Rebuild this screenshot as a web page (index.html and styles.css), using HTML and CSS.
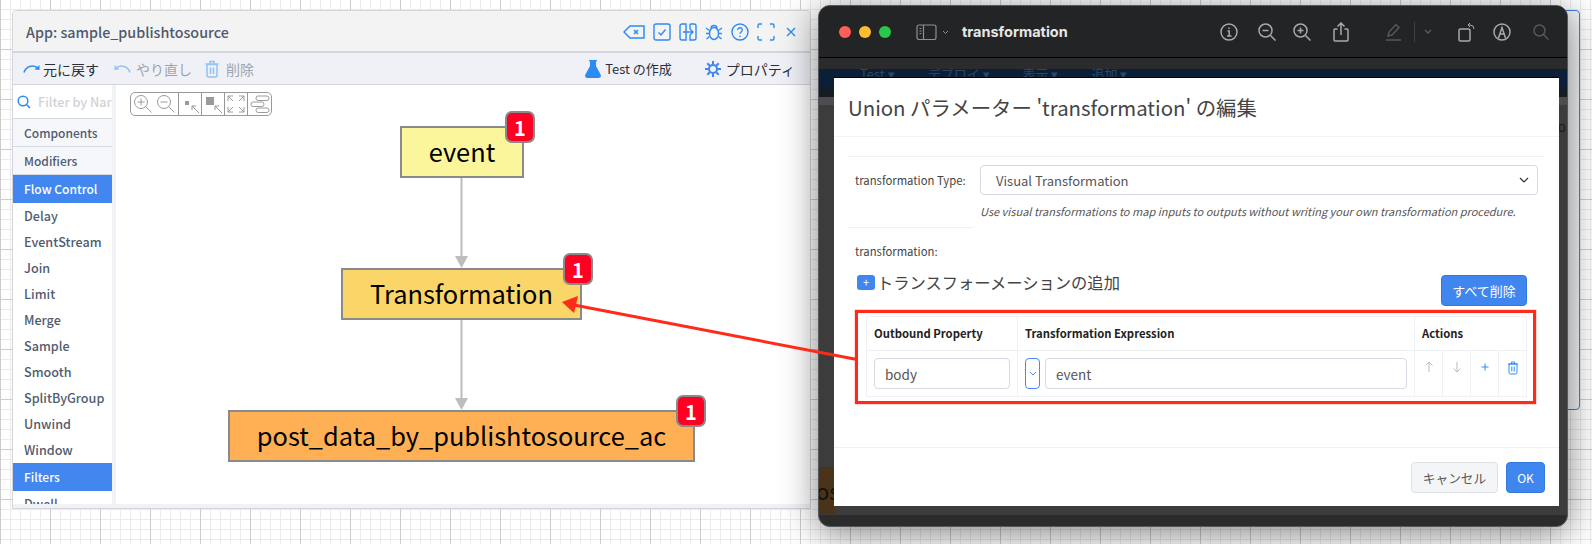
FILE: index.html
```html
<!DOCTYPE html>
<html lang="ja">
<head>
  <meta charset="UTF-8" />
  <title>App: sample_publishtosource</title>
  <link rel="stylesheet" href="styles.css">
</head>
<body>

  <!-- blue panel peeking out behind the preview window -->
  <div class="back-panel"></div>

  <div class="app-window">
    <div class="app-title">
      <span class="app-name">App: sample_publishtosource</span>
      <div class="app-icons">
        <svg width="22" height="14" viewBox="0 0 22 14"><path d="M1 7l6-6h14v12H7z" stroke-width="1.5"/><path d="M11 5l4 4M15 5l-4 4" stroke-width="1.6"/></svg>
        <svg width="18" height="18" viewBox="0 0 18 18"><rect x="1" y="1" width="16" height="16" rx="2"/><path d="M5.5 9.5l2.5 2.5 4.5-5.500"/></svg>
        <svg width="18" height="18" viewBox="0 0 18 18"><path d="M7 1H3a2 2 0 0 0-2 2v12a2 2 0 0 0 2 2h4zM11 1h4a2 2 0 0 1 2 2v12a2 2 0 0 1-2 2h-4v-5M11 6V1M4 9h10M11 6l3 3-3 3"/></svg>
        <svg width="18" height="18" viewBox="0 0 18 18"><ellipse cx="9" cy="10.500" rx="4.500" ry="6"/><path d="M6 5.500a3 3 0 0 1 6 0M1 5l3.500 2.500M17 5l-3.500 2.500M1 10.500h3M14 10.500h3M1.500 16l3-2.500M16.500 16l-3-2.500"/></svg>
        <svg width="18" height="18" viewBox="0 0 18 18"><circle cx="9" cy="9" r="8"/><path d="M6.700 7a2.300 2.300 0 1 1 3.300 2.100c-.7.4-1 .8-1 1.600"/><path d="M9 12.800v1.200" stroke-width="1.600"/></svg>
        <svg width="18" height="18" viewBox="0 0 18 18"><path d="M1 5V2.500A1.500 1.500 0 0 1 2.500 1H5M13 1h2.500A1.500 1.500 0 0 1 17 2.500V5M17 13v2.500a1.500 1.500 0 0 1-1.500 1.500H13M5 17H2.500A1.500 1.500 0 0 1 1 15.500V13"/></svg>
        <svg class="app-close" width="10" height="10" viewBox="0 0 10 10"><path d="M1 1l8 8M9 1l-8 8"/></svg>
      </div>
    </div>

    <div class="app-toolbar">
      <div class="tool">
        <svg class="tool-blue" width="17" height="9" viewBox="0 0 17 9"><path d="M1 8.500C3 2 10 .5 14 3.500"/><path class="solid" d="M11.500 5.500L16.500 6V1z"/></svg>
        <span>元に戻す</span>
      </div>
      <div class="tool tool-off redo">
        <svg class="tool-blue" width="17" height="9" viewBox="0 0 17 9"><path d="M16 8.500C14 2 7 .5 3 3.500"/><path class="solid" d="M5.500 5.500L.5 6V1z"/></svg>
        <span>やり直し</span>
      </div>
      <div class="tool tool-off delete">
        <svg class="tool-blue" width="14" height="18" viewBox="0 0 14 18"><path d="M2 4.500h10V15a2 2 0 0 1-2 2H4a2 2 0 0 1-2-2zM.5 4h13M5 3.500V1.500h4v2M5.500 7.500v6.500M8.500 7.500v6.500"/></svg>
        <span>削除</span>
      </div>
      <div class="tool test">
        <svg width="16" height="18" viewBox="0 0 16 18"><path class="flask" d="M4 0h8v1.200h-1V6l4.600 8.400C16.600 16.300 15.300 18 13.500 18h-11C.7 18-.6 16.300.4 14.400L5 6V1.200H4z"/></svg>
        <span>Test の作成</span>
      </div>
      <div class="tool props">
        <svg width="16" height="16" viewBox="0 0 16 16"><circle class="gear" cx="8" cy="8" r="4"/><path class="gear" d="M8 0v3.500M8 12.500V16M0 8h3.500M12.500 8H16M2.300 2.300l2.500 2.500M11.200 11.200l2.500 2.500M13.700 2.300l-2.500 2.500M4.800 11.200l-2.500 2.500"/></svg>
        <span>プロパティ</span>
      </div>
    </div>

    <div class="app-main">
      <div class="palette">
        <div class="palette-filter">
          <svg width="14" height="14" viewBox="0 0 14 14"><circle cx="6" cy="6" r="4.800"/><path d="M9.500 9.500l3.500 3.500"/></svg>
          <span>Filter by Nar</span>
        </div>
        <div class="palette-section">Components</div>
        <div class="palette-section">Modifiers</div>
        <div class="palette-section palette-active">Flow Control</div>
        <div class="palette-item">Delay</div>
        <div class="palette-item">EventStream</div>
        <div class="palette-item">Join</div>
        <div class="palette-item">Limit</div>
        <div class="palette-item">Merge</div>
        <div class="palette-item">Sample</div>
        <div class="palette-item">Smooth</div>
        <div class="palette-item">SplitByGroup</div>
        <div class="palette-item">Unwind</div>
        <div class="palette-item">Window</div>
        <div class="palette-section palette-active">Filters</div>
        <div class="palette-item">Dwell</div>
      </div>

      <div class="canvas">
        <div class="zoom-bar">
          <div class="zoom-btn"><svg width="20" height="20" viewBox="0 0 20 20"><circle cx="8" cy="8" r="6.500"/><path d="M8 4.500v7M4.500 8h7M12.500 12.500l6 6"/></svg></div>
          <div class="zoom-btn"><svg width="20" height="20" viewBox="0 0 20 20"><circle cx="8" cy="8" r="6.500"/><path d="M4.500 8h7M12.500 12.500l6 6"/></svg></div>
          <div class="zoom-btn"><svg width="20" height="20" viewBox="0 0 20 20"><rect class="zoom-fill" x="5" y="7" width="4" height="4"/><path d="M12 12l7 7M12 12v4M12 12h4"/></svg></div>
          <div class="zoom-btn"><svg width="20" height="20" viewBox="0 0 20 20"><rect class="zoom-fill" x="3" y="3" width="8" height="8"/><path d="M12 12l7 7M12 12v4M12 12h4"/></svg></div>
          <div class="zoom-btn"><svg width="20" height="20" viewBox="0 0 20 20"><path d="M2 2l5 5M2 2v5M2 2h5M18 2l-5 5M18 2v5M18 2h-5M2 18l5-5M2 18v-5M2 18h5M18 18l-5-5M18 18v-5M18 18h-5"/></svg></div>
          <div class="zoom-btn"><svg width="20" height="20" viewBox="0 0 20 20"><rect x="6" y="2" width="13" height="4.500" rx="2.200"/><rect x="1" y="8" width="13" height="4.500" rx="2.200"/><rect x="6" y="14" width="13" height="4.500" rx="2.200"/></svg></div>
        </div>

        <svg class="edges" width="694" height="419" viewBox="0 0 694 419">
          <path d="M345.500 93v80M345.500 235v80"/>
          <polygon points="339,171 352,171 345.500,183"/>
          <polygon points="339,313 352,313 345.500,325"/>
        </svg>

        <div class="node node-event">event<span class="badge">1</span></div>
        <div class="node node-transform">Transformation<span class="badge">1</span></div>
        <div class="node node-post">post_data_by_publishtosource_ac<span class="badge">1</span></div>
      </div>
    </div>
  </div>

  <div class="preview">
    <div class="preview-bar">
      <div class="lights">
        <span class="light light-red"></span>
        <span class="light light-yellow"></span>
        <span class="light light-green"></span>
      </div>
      <svg class="pv-side" width="36" height="16" viewBox="0 0 36 16"><rect x="1" y="1" width="19" height="14.500" rx="2"/><path d="M7.500 1v14.500M3.500 4.500h2M3.500 7h2M3.500 9.500h2"/><path class="thin" d="M27 7l2.500 2.500L32 7"/></svg>
      <span class="pv-title">transformation</span>
      <div class="pv-tools">
        <svg class="pv-info" width="18" height="18" viewBox="0 0 18 18"><circle cx="9" cy="9" r="8"/><path d="M7.500 8H9.200v5M7 13h4.500M9 4.500v1.400"/></svg>
        <svg class="pv-zout" width="18" height="18" viewBox="0 0 18 18"><circle cx="7.500" cy="7.500" r="6.500"/><path d="M4.500 7.500h6M12.500 12.500l5 5"/></svg>
        <svg class="pv-zin" width="18" height="18" viewBox="0 0 18 18"><circle cx="7.500" cy="7.500" r="6.500"/><path d="M4.500 7.500h6M7.500 4.500v6M12.500 12.500l5 5"/></svg>
        <svg class="pv-share" width="16" height="20" viewBox="0 0 16 20"><path d="M4.500 7H2a1 1 0 0 0-1 1v10a1 1 0 0 0 1 1h12a1 1 0 0 0 1-1V8a1 1 0 0 0-1-1h-2.500M8 13V1M4.500 4.500L8 1l3.500 3.500"/></svg>
        <svg class="pv-pen dim" width="17" height="18" viewBox="0 0 17 18"><path d="M3 13l1-4 7-7.500 3 3L7 12zM1 17h15"/></svg>
        <span class="pv-divider"></span>
        <svg class="pv-chev dim" width="8" height="5" viewBox="0 0 8 5"><path d="M1 1l3 3 3-3"/></svg>
        <svg class="pv-rotate" width="18" height="20" viewBox="0 0 18 20"><rect x="1" y="7" width="11" height="12" rx="1.500"/><path class="thin" d="M10 3h2a4 4 0 0 1 4 4M12 1l-2 2 2 2"/></svg>
        <svg class="pv-markup" width="18" height="18" viewBox="0 0 18 18"><circle cx="9" cy="9" r="8"/><path d="M5.500 15L9 4.500 12.500 15M7.300 11h3.400"/></svg>
        <svg class="pv-search dim" width="16" height="16" viewBox="0 0 16 16"><circle cx="6.500" cy="6.500" r="5.500"/><path d="M10.500 10.500l5 5"/></svg>
      </div>
    </div>

    <div class="preview-body">
      <div class="dim-menu">
        <span>Test ▾</span>
        <span>デプロイ ▾</span>
        <span>表示 ▾</span>
        <span>追加 ▾</span>
      </div>
      <span class="dim-right">to</span>
      <span class="dim-left">os</span>

      <div class="modal">
        <div class="modal-head">Union パラメーター 'transformation' の編集</div>

        <div class="modal-body">
          <div class="form-row">
            <span class="form-label">transformation Type:</span>
            <div class="form-field">
              <div class="select-box">
                <span>Visual Transformation</span>
                <svg width="10" height="6" viewBox="0 0 10 6"><path d="M1 1l4 4 4-4"/></svg>
              </div>
              <p class="help">Use visual transformations to map inputs to outputs without writing your own transformation procedure.</p>
            </div>
          </div>
          <div class="short-rule"></div>
          <div class="form-label field-name">transformation:</div>

          <div class="add-row">
            <div class="add-link">
              <span class="add-plus">+</span>
              <span>トランスフォーメーションの追加</span>
            </div>
            <button class="btn btn-blue btn-clear">すべて削除</button>
          </div>

          <div class="red-box">
            <table class="expr-table">
              <colgroup>
                <col class="col-prop">
                <col class="col-expr">
                <col class="col-act">
                <col class="col-act">
                <col class="col-act">
                <col class="col-act">
              </colgroup>
              <thead>
                <tr>
                  <th>Outbound Property</th>
                  <th>Transformation Expression</th>
                  <th colspan="4">Actions</th>
                </tr>
              </thead>
              <tbody>
                <tr>
                  <td><input class="text-input" value="body"></td>
                  <td>
                    <div class="expr-cell">
                      <span class="mode-btn"><svg width="8" height="5" viewBox="0 0 8 5"><path d="M1 1l3 3 3-3"/></svg></span>
                      <input class="text-input" value="event">
                    </div>
                  </td>
                  <td class="act"><svg class="act-off" width="10" height="12" viewBox="0 0 10 12"><path d="M5 11V1M1.500 4.500L5 1l3.500 3.500"/></svg></td>
                  <td class="act"><svg class="act-off" width="10" height="12" viewBox="0 0 10 12"><path d="M5 1v10M1.500 7.500L5 11l3.500-3.500"/></svg></td>
                  <td class="act"><svg class="act-on" width="10" height="12" viewBox="0 0 10 12"><path d="M5 2.500v7M1.500 6h7"/></svg></td>
                  <td class="act"><svg class="act-on" width="12" height="14" viewBox="0 0 12 14"><path d="M2 3h8v8.500a1.500 1.500 0 0 1-1.500 1.500h-5A1.500 1.500 0 0 1 2 11.500zM1 3h10M4.500 3V1h3v2M4.800 5.500v5M7.200 5.500v5"/></svg></td>
                </tr>
              </tbody>
            </table>
          </div>
        </div>

        <div class="modal-foot">
          <button class="btn btn-gray">キャンセル</button>
          <button class="btn btn-blue btn-ok">OK</button>
        </div>
      </div>
    </div>
  </div>

  <!-- red callout drawn over both windows -->
  <svg class="callout" width="1592" height="544" viewBox="0 0 1592 544">
    <line x1="857" y1="359.500" x2="574" y2="305"/>
    <polygon points="562,302 578,296 574,313"/>
  </svg>

</body>
</html>
```

FILE: styles.css
```css
* {
  box-sizing: border-box;
}

html, body {
  margin: 0;
  width: 1592px;
  height: 544px;
  overflow: hidden;
}

body {
  position: relative;
  font-family: 'Noto Sans CJK JP', 'Noto Sans', sans-serif;
  background-color: #fff;
  background-image:
    linear-gradient(#cdcdcd 1px, transparent 1px),
    linear-gradient(90deg, #cdcdcd 1px, transparent 1px),
    linear-gradient(#ebebeb 1px, transparent 1px),
    linear-gradient(90deg, #ebebeb 1px, transparent 1px);
  background-size: 50px 50px, 50px 50px, 10px 10px, 10px 10px;
  background-position: 0 49px, 50px 0, 0 9px, 0 0;
}

svg {
  display: block;
  flex: none;
  fill: none;
}

/* panel behind the preview */
.back-panel {
  position: absolute;
  left: 1500px;
  top: 10px;
  width: 80px;
  height: 400px;
  background: #f4f5f7;
  border: 1px solid #3f7fe0;
  border-radius: 4px;
}

/* app window */
.app-window {
  position: absolute;
  left: 12px;
  top: 10px;
  width: 799px;
  height: 499px;
  display: flex;
  flex-direction: column;
  background: #f1f2f6;
  border: 1px solid #d3d5da;
  border-radius: 4px 4px 0 0;
  overflow: hidden;
}

.app-title {
  height: 42px;
  flex: none;
  display: flex;
  align-items: center;
  justify-content: space-between;
  padding: 1px 14px 0 13px;
  background: #f3f3f4;
  border-bottom: 2px solid #d2d5dc;
}

.app-name {
  font-size: 14.300px;
  font-weight: 500;
  color: #4d5a6e;
}

.app-icons {
  display: flex;
  align-items: center;
  gap: 8px;
}

.app-icons svg {
  stroke: #2c8cf4;
  stroke-width: 1.4;
}

.app-close {
  margin-left: 3px;
}

.app-toolbar {
  height: 32px;
  flex: none;
  display: flex;
  align-items: center;
  padding: 0 15px 0 10px;
  font-size: 14px;
  color: #2b3038;
  background: #eff1f7;
  border-bottom: 1px solid #d0d3db;
}

.tool {
  display: flex;
  align-items: center;
  gap: 3px;
}

.tool-off {
  color: #a0a4ad;
}

.tool-off svg {
  opacity: 0.45;
}

.tool-blue {
  stroke: #2c8cf4;
  stroke-width: 1.6;
}

.tool-blue .solid {
  fill: #2c8cf4;
  stroke: none;
}

.redo {
  margin-left: 15px;
  gap: 5px;
}

.delete {
  margin-left: 13px;
  gap: 7px;
}

.test {
  margin-left: auto;
  gap: 4px;
  font-size: 13px;
}

.flask {
  fill: #2c8cf4;
}

.props {
  margin-left: 33px;
  gap: 5px;
}

.gear {
  stroke: #3f86ee;
  stroke-width: 2;
}

.app-main {
  flex: 1;
  min-height: 0;
  display: flex;
  background: #f1f2f6;
}

/* left palette */
.palette {
  width: 99px;
  height: 419px;
  flex: none;
  overflow: hidden;
  background: #fff;
  color: #505c70;
  font-size: 12.600px;
  font-weight: 500;
}

.palette-filter {
  height: 34px;
  display: flex;
  align-items: center;
  gap: 7px;
  padding-left: 4px;
  border-bottom: 1px solid #d6d9e0;
  white-space: nowrap;
  overflow: hidden;
  color: #d0d2d8;
}

.palette-filter svg {
  stroke: #2c8cf4;
  stroke-width: 1.5;
}

.palette-section {
  height: 28px;
  line-height: 27px;
  padding-left: 11px;
  font-size: 12px;
  background: #f6f7fb;
  border-bottom: 1px solid #d6d9e0;
}

.palette-active {
  background: #4187ef;
  color: #fff;
  border-bottom: none;
}

.palette-item {
  height: 26px;
  line-height: 26px;
  padding-left: 11px;
}

.canvas {
  position: relative;
  width: 695px;
  height: 419px;
  flex: none;
  margin-left: 4px;
  background: #fff;
}

.zoom-bar {
  position: absolute;
  left: 14px;
  top: 7px;
  display: flex;
  height: 24px;
  border: 1px solid #999;
  border-radius: 5px;
  background: #fff;
}

.zoom-btn {
  width: 23.300px;
  display: flex;
  align-items: center;
  justify-content: center;
  border-left: 1px solid #999;
}

.zoom-btn:first-child {
  border-left: 0;
}

.zoom-btn:nth-child(2) {
  border-left: 0;
}

.zoom-btn svg {
  stroke: #9a9a9a;
  stroke-width: 1;
}

.zoom-btn .zoom-fill {
  fill: #9a9a9a;
  stroke: none;
}

.edges {
  position: absolute;
  left: 0;
  top: 0;
}

.edges path {
  stroke: #bdbdbd;
  stroke-width: 2;
}

.edges polygon {
  fill: #bdbdbd;
}

.node {
  position: absolute;
  height: 52px;
  padding-bottom: 3px;
  display: flex;
  align-items: center;
  justify-content: center;
  font-size: 25.400px;
  color: #000;
  white-space: nowrap;
  border: 2px solid #8a8a8a;
}

.node-event {
  left: 284px;
  top: 41px;
  width: 124px;
  background: #fbf59b;
}

.node-transform {
  left: 225px;
  top: 183px;
  width: 241px;
  background: #fad568;
}

.node-post {
  left: 112px;
  top: 325px;
  width: 467px;
  background: #ffb055;
}

.badge {
  position: absolute;
  right: -13px;
  top: -17px;
  width: 30px;
  height: 32px;
  display: flex;
  align-items: center;
  justify-content: center;
  font-size: 20px;
  font-weight: 700;
  color: #fff;
  background: #ff0022;
  border: 2px solid #8a8a8a;
  border-radius: 7px;
}

/* preview window */
.preview {
  position: absolute;
  left: 818px;
  top: 5px;
  width: 750px;
  height: 522px;
  display: flex;
  flex-direction: column;
  background: #2b2b2b;
  border: 1px solid #55575a;
  border-radius: 12px;
  overflow: hidden;
  box-shadow: 0 6px 36px rgba(0, 0, 0, 0.5);
}

.preview-bar {
  height: 52px;
  flex: none;
  display: flex;
  align-items: center;
  padding-left: 20px;
  background: #232425;
  border-bottom: 1px solid #000;
}

.lights {
  display: flex;
  gap: 8px;
}

.light {
  width: 12px;
  height: 12px;
  border-radius: 50%;
}

.light-red { background: #fe5f57; }
.light-yellow { background: #febc2e; }
.light-green { background: #29c84a; }

.pv-side {
  margin-left: 25px;
  stroke: #8e8f91;
  stroke-width: 1.2;
}

.pv-side .thin {
  stroke-width: 1;
}

.pv-title {
  margin-left: 10px;
  font-family: Inter, 'Noto Sans', sans-serif;
  font-size: 14.500px;
  font-weight: 700;
  color: #e6e6e6;
}

.pv-tools {
  flex: 1;
  display: flex;
  align-items: center;
  padding-left: 152px;
}

.pv-tools svg {
  stroke: #a8a9aa;
  stroke-width: 1.5;
}

.pv-tools .dim {
  stroke: #55575a;
}

.pv-tools .thin {
  stroke-width: 1;
}

.pv-zout { margin-left: 20px; }
.pv-zin { margin-left: 17px; }
.pv-share { margin-left: 22px; }
.pv-pen { margin-left: 36px; }
.pv-chev { margin-left: 9px; }
.pv-rotate { margin-left: 26px; }
.pv-markup { margin-left: 17px; }
.pv-search { margin-left: 22px; }

.pv-divider {
  width: 1px;
  height: 20px;
  margin-left: 12px;
  background: #3f4042;
}

.preview-body {
  position: relative;
  flex: 1;
  margin-top: 11px;
  margin-bottom: 11px;
  background: linear-gradient(#0b1f38 0, #0b1f38 18px, #161c24 18px, #161c24 28px, #4d4d4d 28px, #4d4d4d 36px, #3c3c3c 36px);
}

.dim-menu {
  display: flex;
  gap: 33px;
  margin-top: -3px;
  padding: 0 0 0 41px;
  font-size: 13px;
  line-height: 16px;
  color: #2c4766;
  white-space: nowrap;
}

.dim-right {
  position: absolute;
  right: 1px;
  top: 47px;
  font-size: 14px;
  color: #1a1a1a;
}

.dim-left {
  position: absolute;
  left: 0;
  top: 398px;
  width: 16px;
  height: 47px;
  overflow: hidden;
  padding-top: 8px;
  font-size: 22px;
  line-height: 30px;
  color: #111;
  text-indent: -3px;
  background: #4a3318;
}

/* modal */
.modal {
  position: absolute;
  left: 15px;
  top: 8px;
  width: 725px;
  height: 429px;
  display: flex;
  flex-direction: column;
  background: #fff;
  color: #444;
  border-top: 1px solid #000;
}

.modal-head {
  height: 59px;
  flex: none;
  padding-left: 14px;
  font-size: 20.400px;
  line-height: 58px;
  border-bottom: 1px solid #f2f3f5;
}

.modal-body {
  flex: 1;
  min-height: 0;
  padding: 19px 14px 0;
}

.form-row {
  display: flex;
  padding: 8px 7px 0;
  border-top: 1px solid #eef0f3;
}

.form-label {
  font-size: 11.300px;
  color: #444;
  white-space: nowrap;
}

.form-row .form-label {
  width: 125px;
  flex: none;
  line-height: 30px;
}

.form-field {
  flex: 1;
}

.select-box {
  height: 30px;
  display: flex;
  align-items: center;
  justify-content: space-between;
  padding: 0 8px 0 15px;
  font-size: 13px;
  color: #555;
  border: 1px solid #d6d8e4;
  border-radius: 4px;
}

.select-box svg {
  stroke: #333;
  stroke-width: 1.2;
}

.help {
  margin: 8px 0 0;
  font-size: 11px;
  line-height: 16px;
  font-style: italic;
  color: #555;
  white-space: nowrap;
}

.short-rule {
  width: 125px;
  height: 1px;
  margin-top: 8px;
  background: #eef0f3;
}

.field-name {
  padding-left: 7px;
  margin-top: 14px;
  line-height: 18px;
}

.add-row {
  display: flex;
  align-items: flex-start;
  justify-content: space-between;
  height: 36px;
  margin-top: 14px;
  padding: 0 18px 0 9px;
}

.add-link {
  display: flex;
  align-items: center;
  height: 16px;
  gap: 2px;
  font-size: 16.300px;
  color: #444;
}

.add-plus {
  width: 18px;
  height: 15px;
  display: flex;
  align-items: center;
  justify-content: center;
  font-size: 11px;
  color: #fff;
  background: #3f86ee;
  border-radius: 3px;
}

.btn {
  height: 31px;
  padding: 0;
  font-family: inherit;
  border-radius: 4px;
}

.btn-blue {
  color: #fff;
  background: #3f86ee;
  border: 1px solid #3178e0;
}

.btn-gray {
  width: 87px;
  font-size: 12.700px;
  color: #555;
  background: #f4f5f7;
  border: 1px solid #dfe1e6;
}

.btn-clear {
  width: 86px;
  margin-top: 1px;
  font-size: 13px;
}

.btn-ok {
  width: 39px;
  font-size: 12px;
}

.red-box {
  width: 681px;
  height: 94px;
  margin-left: 7px;
  padding: 3px 7px 4px 8px;
  border: 3px solid #ff2a1a;
  box-shadow: 0 0 1px #ff2a1a;
}

.expr-table {
  width: 660px;
  table-layout: fixed;
  border-collapse: collapse;
}

.col-prop { width: 151px; }
.col-expr { width: 397px; }
.col-act { width: 28px; }

.expr-table th,
.expr-table td {
  border: 1px solid #eff0f3;
}

.expr-table th {
  height: 34px;
  padding: 0 7px 2px;
  font-size: 11.300px;
  font-weight: 700;
  color: #222;
  text-align: left;
  white-space: nowrap;
}

.expr-table td {
  height: 46px;
  padding: 7px;
  vertical-align: top;
}

.expr-cell {
  display: flex;
  gap: 5px;
}

.mode-btn {
  width: 15px;
  height: 31px;
  flex: none;
  display: flex;
  align-items: center;
  justify-content: center;
  border: 1px solid #4a8bf0;
  border-radius: 4px;
}

.mode-btn svg {
  stroke: #4a8bf0;
  stroke-width: 1;
}

.text-input {
  width: 100%;
  height: 31px;
  padding: 0 10px;
  font-family: inherit;
  font-size: 13.500px;
  color: #555;
  background: #fff;
  border: 1px solid #d6d8e4;
  border-radius: 4px;
}

.expr-table td.act {
  padding: 10px 0 0;
}

.act svg {
  margin: 0 auto;
  stroke-width: 1;
}

.act-off {
  stroke: #b9bbc2;
}

.act-on {
  stroke: #2c8cf4;
}

.modal-foot {
  height: 59px;
  flex: none;
  display: flex;
  justify-content: flex-end;
  gap: 8px;
  padding: 14px 14px 0;
  border-top: 1px solid #eef0f3;
}

/* callout */
.callout {
  position: absolute;
  left: 0;
  top: 0;
  pointer-events: none;
}

.callout line {
  stroke: #ff2a1a;
  stroke-width: 3;
}

.callout polygon {
  fill: #ff2a1a;
}
```
